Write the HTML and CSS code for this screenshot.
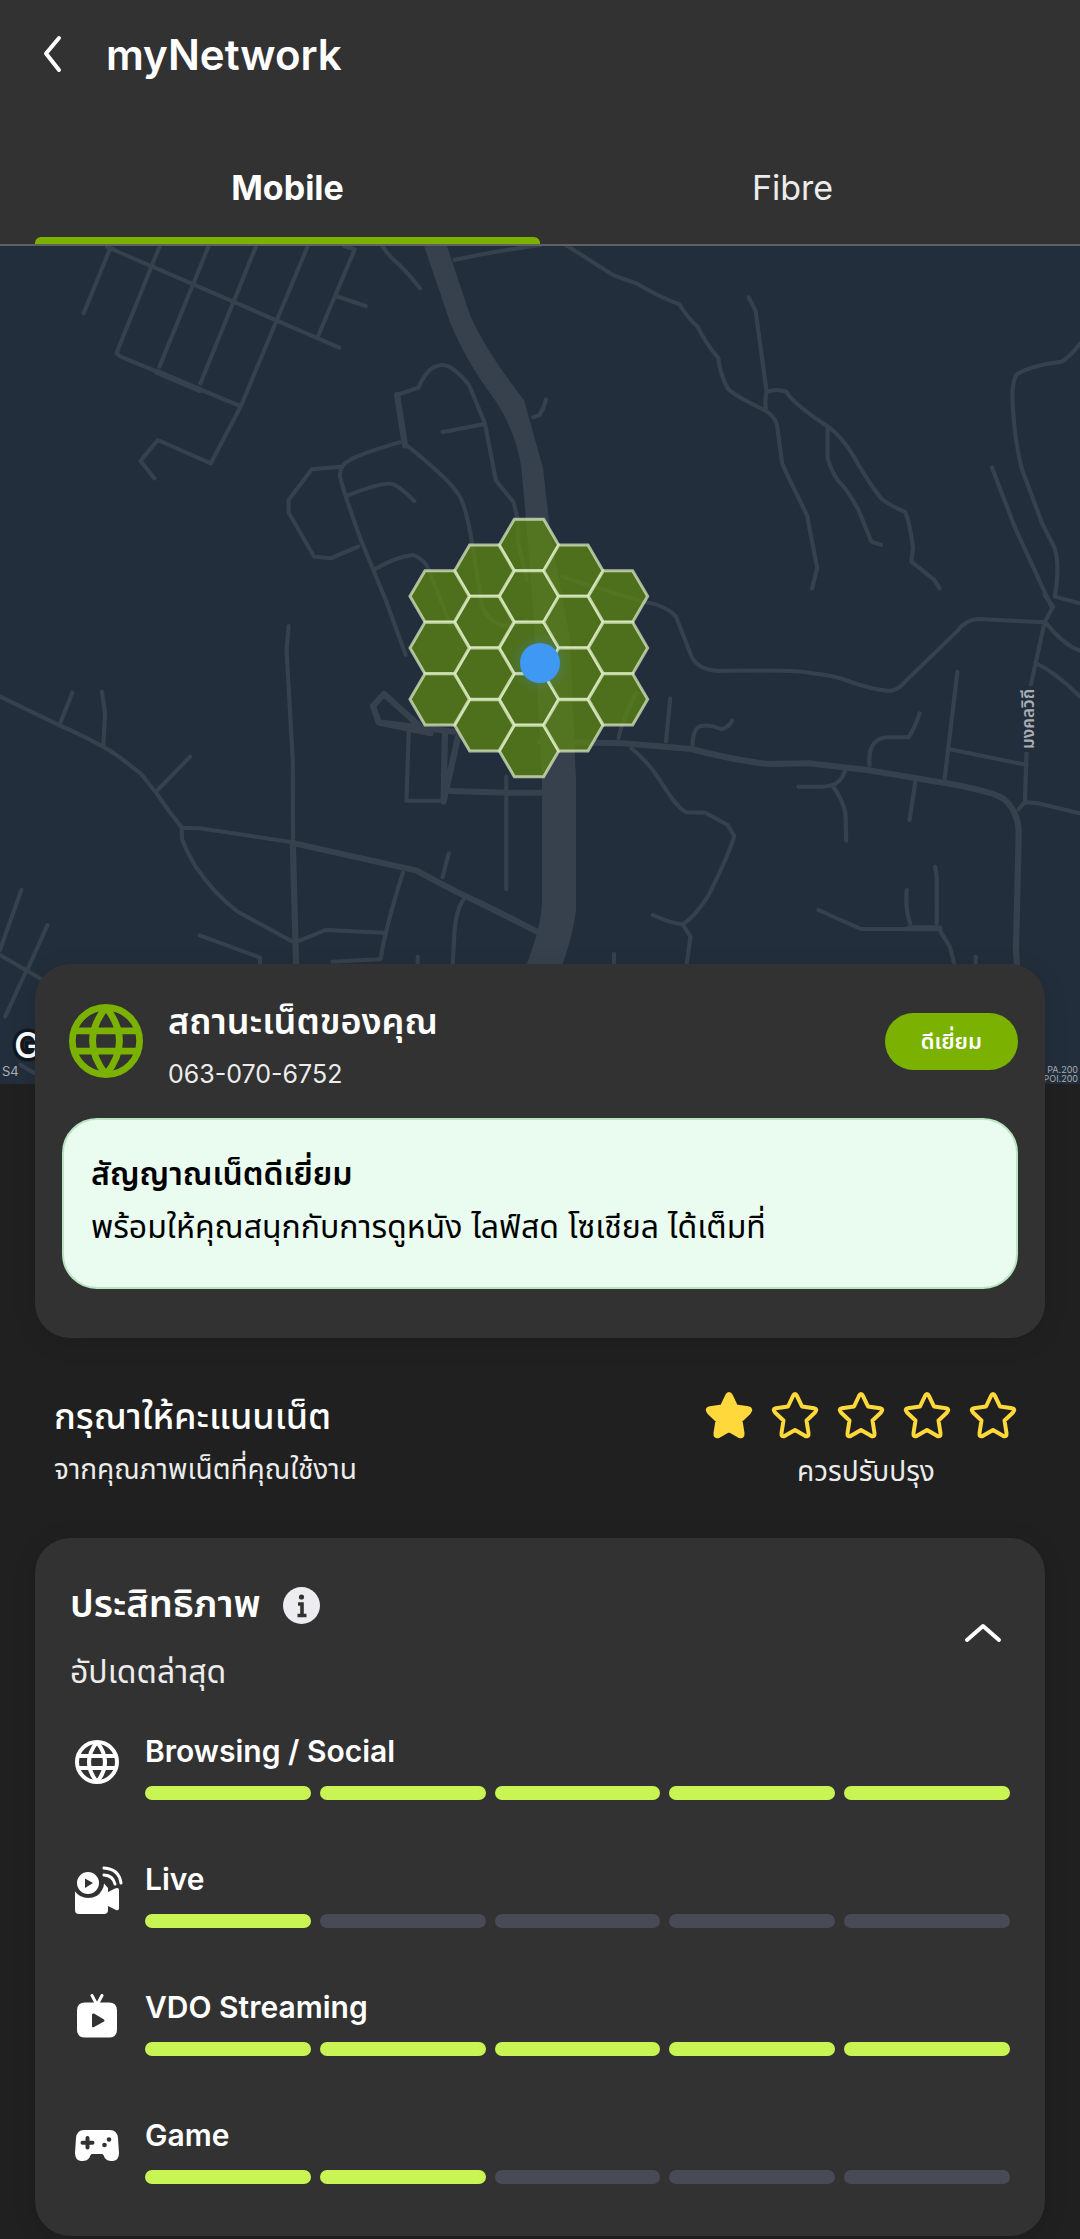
FILE: index.html
```html
<!DOCTYPE html>
<html lang="th">
<head>
    <meta charset="UTF-8">
    <meta name="viewport" content="width=device-width, initial-scale=1.0">
    <title>myNetwork</title>
    <link rel="stylesheet" href="styles.css">
</head>
<body>

<header class="header">
    <div class="title-bar">
        <button class="back-btn" aria-label="Back">
            <svg width="20" height="38" viewBox="0 0 20 38"><path d="M17 3 4 18.500 17 35"/></svg>
        </button>
        <h1>myNetwork</h1>
    </div>
    <nav class="tabs">
        <button class="tab active">Mobile</button>
        <button class="tab">Fibre</button>
    </nav>
</header>

<main>
    <div class="map">
        <svg viewBox="0 246 1080 838">
            <defs>
                <path id="hex" d="M-89 0-44-77H44L89 0 44 77H-44Z"/>
                <radialGradient id="glow">
                    <stop offset=".5" stop-color="#4098f5" stop-opacity=".2"/>
                    <stop offset="1" stop-color="#4098f5" stop-opacity="0"/>
                </radialGradient>
            </defs>
            <rect class="land" y="246" width="1080" height="838"/>

            <!-- river road -->
            <path class="road-fill" d="M424 246H447L470 315Q485 350 524 400L543 468 550 530 570 640 576 780V910Q573 935 562 966H526Q542 925 542 900V780L535 640 527 530 521 465Q515 430 495 400 465 360 450 322Z"/>

            <!-- north west -->
            <g class="roads" transform="translate(0 240) scale(.3444 .3333)">
                <path d="M243 220 320 25 985 323M310 20 330 28M465 15 338 340 350 350 695 497M607 15 463 380M745 15 582 430M895 15 700 497 612 670 458 600 408 663 448 715"/>
                <path d="M1000 18 1030 28 922 292M975 168 1062 198M1110 18Q1130 50 1160 75 1190 105 1220 145M1320 60Q1400 40 1568 15M1568 525 1548 532"/>
                <path d="M1153 465 1215 443Q1235 395 1260 382 1285 368 1308 382 1340 405 1362 435L1408 550 1440 722 1490 785Q1510 850 1503 900L1530 1020"/>
                <path d="M1285 576 1405 553M1160 607Q1050 640 1020 658 985 675 987 710 1000 765 1050 905L1120 1080 1178 1245M990 680 905 688 838 780V818L912 950 960 955 1040 920M1008 767Q1110 725 1140 732 1160 740 1203 783M1090 987Q1150 950 1200 945 1235 960 1245 990L1310 1160M1180 615Q1300 715 1325 755 1350 780 1370 905L1400 1100Q1440 1190 1530 1140"/>
                <path class="thick" d="M455 395 580 450M1153 465 1176 617"/>
            </g>

            <!-- north east -->
            <g class="roads" transform="translate(540 240) scale(.3444 .3333)">
                <path d="M75 15 215 107 280 130Q350 173 405 193 425 230 458 260 475 300 518 355 522 400 545 445 560 465 655 512 690 535 690 570L703 670Q715 700 775 825L805 985 790 1045"/>
                <path d="M606 172 626 212 658 455Q690 445 715 455 735 490 833 558 880 590 925 675 960 735 990 775 1020 800 1060 815 1075 850 1083 925L1078 965 1145 1020 1160 1045M658 455Q652 480 656 512M835 560V655Q845 690 865 722 890 745 925 810L962 905 990 915"/>
                <path d="M1568 310Q1540 350 1515 365 1430 375 1385 402 1365 430 1375 530 1380 610 1400 690L1460 855 1490 915Q1512 960 1495 1070L1568 1090M1312 682 1380 865 1485 1100"/>
                <path d="M0 520Q12 505 17 478M65 1010Q150 1040 310 1088"/>
            </g>

            <!-- south west -->
            <g class="roads" transform="translate(0 600) scale(.3444 .3333)">
                <path d="M0 290 175 377Q290 430 345 470L408 520 453 578Q490 635 528 683L580 685 850 727M175 370 210 278M296 275 305 340 300 440M453 575 552 470M838 78 832 150 850 480 851 720M528 683V715Q540 750 568 800 620 880 690 935L850 1025"/>
                <path d="M0 1050 62 870M0 1065 140 1150M80 1108 138 975M80 1105 15 1250M60 1395 110 1425M580 1006 755 1073V1100M870 1022 945 990 1115 998M1170 818Q1120 980 1105 1078L965 1085M1285 832 1303 760M1345 900Q1325 930 1320 990L1314 1100M1213 1070V1100M1470 530V867M1187 395 1180 602H1280"/>
                <path class="thick" d="M1250 400 1100 368 1083 318 1115 282 1215 375M1110 368 1320 395M1292 400 1288 605 1330 410M1310 573 1475 578H1568M850 727 860 1100M855 730 1210 812Q1330 880 1400 912L1560 995"/>
            </g>

            <!-- south east -->
            <g class="roads" transform="translate(540 600) scale(.3444 .3333)">
                <path d="M315 8Q370 20 395 50L440 170Q460 210 520 213 750 208 790 220 850 225 900 245 960 268 1015 273 1040 270 1060 245L1210 95Q1235 60 1270 57L1465 67 1490 20 1465-15M1465 67 1423 265M1470 70Q1520 135 1568 152M1440 190Q1500 220 1568 290M1413 445 1408 605 1390 628M1408 607 1445 610 1568 640"/>
                <path d="M1212 215 1175 535M1190 448 1413 495M957 495Q950 415 1010 412H1070Q1090 380 1102 340M1090 545 1073 660M885 515Q870 560 820 560H750M850 558Q880 600 887 640L889 722M1147 800 1152 830V970M1065 870Q1060 930 1075 970M808 930 932 987H1070M1160 990 1190 1040 1205 1100M1265 1070V1100"/>
                <path d="M228 415Q235 370 278 280M378 295 366 425M443 435Q445 375 475 377 500 375 525 387 545 385 558 362M265 445Q320 490 360 560 400 625 425 637L480 638 545 675 564 708Q550 760 490 885 450 950 415 973 380 970 328 945M415 975 437 1010 425 1100M215 1062V1100"/>
                <path class="thick" d="M0 425 240 430 440 447Q560 480 660 492L780 490 950 510 1210 555Q1330 580 1350 600 1390 640 1390 700L1382 1050 1385 1100M1072 985H1160"/>
            </g>

            <g class="hexes" transform="translate(380 500) scale(.3333)">
                <use href="#hex" x="447" y="135"/>
                <use href="#hex" x="447" y="289"/>
                <use href="#hex" x="447" y="444"/>
                <use href="#hex" x="447" y="598"/>
                <use href="#hex" x="447" y="753"/>
                <use href="#hex" x="313" y="212"/>
                <use href="#hex" x="313" y="366"/>
                <use href="#hex" x="313" y="521"/>
                <use href="#hex" x="313" y="676"/>
                <use href="#hex" x="580" y="212"/>
                <use href="#hex" x="580" y="366"/>
                <use href="#hex" x="580" y="521"/>
                <use href="#hex" x="580" y="676"/>
                <use href="#hex" x="179" y="289"/>
                <use href="#hex" x="179" y="444"/>
                <use href="#hex" x="179" y="598"/>
                <use href="#hex" x="714" y="289"/>
                <use href="#hex" x="714" y="444"/>
                <use href="#hex" x="714" y="598"/>
            </g>
            <circle cx="540" cy="663" r="30" fill="url(#glow)"/>
            <circle cx="540" cy="663" r="20" fill="#4098f5"/>

            <rect class="land" x="1014" y="686" width="26" height="66"/>
            <text class="road-name" transform="translate(1034 749) rotate(-90)">มงคลวิถี</text>
            <text class="logo" x="14" y="1058">Google</text>
            <text class="credit" x="2" y="1076">S4</text>
            <text class="credit small" x="1078" y="1073">PA.200</text>
            <text class="credit small" x="1078" y="1082">POI.200</text>
        </svg>
    </div>

    <section class="card status">
        <div class="status-top">
            <svg class="globe" viewBox="2 2 44 44"><use href="#globe"/></svg>
            <div class="status-name">
                <h2>สถานะเน็ตของคุณ</h2>
                <p>063-070-6752</p>
            </div>
            <span class="badge">ดีเยี่ยม</span>
        </div>
        <div class="message">
            <h3>สัญญาณเน็ตดีเยี่ยม</h3>
            <p>พร้อมให้คุณสนุกกับการดูหนัง ไลฟ์สด โซเชียล ได้เต็มที่</p>
        </div>
    </section>

    <section class="rating">
        <div class="rating-text">
            <h2>กรุณาให้คะแนนเน็ต</h2>
            <p>จากคุณภาพเน็ตที่คุณใช้งาน</p>
        </div>
        <div class="rating-score">
            <div class="stars">
                <label><input type="radio" name="score" value="1" aria-label="1" checked><svg viewBox="0 0 48 48"><use href="#star"/></svg></label>
                <label><input type="radio" name="score" value="2" aria-label="2"><svg viewBox="0 0 48 48"><use href="#star"/></svg></label>
                <label><input type="radio" name="score" value="3" aria-label="3"><svg viewBox="0 0 48 48"><use href="#star"/></svg></label>
                <label><input type="radio" name="score" value="4" aria-label="4"><svg viewBox="0 0 48 48"><use href="#star"/></svg></label>
                <label><input type="radio" name="score" value="5" aria-label="5"><svg viewBox="0 0 48 48"><use href="#star"/></svg></label>
            </div>
            <p>ควรปรับปรุง</p>
        </div>
    </section>

    <section class="card performance">
        <div class="performance-top">
            <div>
                <div class="performance-title">
                    <h2>ประสิทธิภาพ</h2>
                    <button class="info-btn" aria-label="Info">
                        <svg viewBox="0 0 37 37"><circle cx="18.500" cy="18.500" r="18.500" fill="#ececf1"/><circle cx="18.500" cy="10" r="2.600" fill="#323232"/><path d="M15 17h4v11M14.500 28.500h9" fill="none" stroke="#323232" stroke-width="3.600"/></svg>
                    </button>
                </div>
                <p>อัปเดตล่าสุด</p>
            </div>
            <button class="toggle-btn" aria-label="Collapse">
                <svg width="38" height="20" viewBox="0 0 38 20"><path d="M3 17 19 3 35 17"/></svg>
            </button>
        </div>

        <ul class="metrics">
            <li>
                <svg class="icon" viewBox="0 0 50 50"><use href="#globe"/></svg>
                <div class="metric">
                    <h3>Browsing / Social</h3>
                    <div class="bars"><i class="on"></i><i class="on"></i><i class="on"></i><i class="on"></i><i class="on"></i></div>
                </div>
            </li>
            <li>
                <svg class="icon" viewBox="0 0 50 50">
                    <path fill-rule="evenodd" d="M15 6a11 11 0 1 0 0 22 11 11 0 1 0 0-22ZM12 12.500 20 17 12 22Z"/>
                    <path d="M2 25.500Q7 32 15 32 25 32 29 24 31 21 31 17.500L35 22V26L42 22.500Q46 21 46 24V42Q46 45 43 44L35 40V44Q35 48 31 48H6Q2 48 2 44Z"/>
                    <path class="line" d="M31 2Q46 3 48 17M31 9Q40 9.500 42 18"/>
                </svg>
                <div class="metric">
                    <h3>Live</h3>
                    <div class="bars"><i class="on"></i><i></i><i></i><i></i><i></i></div>
                </div>
            </li>
            <li>
                <svg class="icon" viewBox="0 0 50 50">
                    <path fill-rule="evenodd" d="M12 8.500H36Q44 8.500 44 16.500V35.500Q44 43.500 36 43.500H12Q4 43.500 4 35.500V16.500Q4 8.500 12 8.500ZM19 20.500V32.500Q19.500 34 21 33L31 27.500Q32 26.500 31 25.500L21 19.500Q19.500 19 19 20.500Z"/>
                    <path class="line" d="M19 1.500 23 9M29 1.500 25 9"/>
                </svg>
                <div class="metric">
                    <h3>VDO Streaming</h3>
                    <div class="bars"><i class="on"></i><i class="on"></i><i class="on"></i><i class="on"></i><i class="on"></i></div>
                </div>
            </li>
            <li>
                <svg class="icon" viewBox="0 0 50 50">
                    <path d="M11 8H37Q44 8 45 16L46 31Q46 38 40 39 34 39.500 31.500 35.500 30.500 32 29 32H19Q17.500 32 16.500 35.500 14 39.500 8 39 2 38 2 31L3 16Q4 8 11 8Z"/>
                    <path class="cut" d="M14.500 16V25.500M9.500 20.700H19.500"/>
                    <circle class="dot" cx="36" cy="17.500" r="2.300"/>
                    <circle class="dot" cx="31.500" cy="23" r="2.300"/>
                </svg>
                <div class="metric">
                    <h3>Game</h3>
                    <div class="bars"><i class="on"></i><i class="on"></i><i></i><i></i><i></i></div>
                </div>
            </li>
        </ul>
    </section>
</main>

<!-- shared icons -->
<svg class="sprite" aria-hidden="true">
    <symbol id="globe" overflow="visible">
        <g fill="none" stroke="currentColor" stroke-width="4">
            <circle cx="24" cy="24" r="20"/>
            <path d="M24 4Q8 24 24 44M24 4Q40 24 24 44M5 18H43M5 30H43"/>
        </g>
    </symbol>
    <symbol id="star" overflow="visible">
        <path d="M22 5Q24 1 26 5L31 15.500 43 17.200Q47 18 44 21.500L35.500 29.500 37.500 42Q38 46.500 34 44.800L24 39 14 44.800Q10 46.500 10.500 42L12.500 29.500 4 21.500Q1 18 5 17.200L17 15.500Z"/>
    </symbol>
</svg>

</body>
</html>
```
FILE: styles.css
```css
* { box-sizing: border-box; margin: 0; padding: 0; }
body { min-height: 100vh; font-family: Inter, "Liberation Sans", "Noto Sans Thai", sans-serif; background: #202020; color: #fff; }
button { font: inherit; color: inherit; background: none; border: none; cursor: pointer; }
svg { display: block; }
.sprite { position: absolute; width: 0; height: 0; }

.header { background: #323232; border-bottom: 2px solid #5f6062; }
.title-bar { display: flex; align-items: center; gap: 44px; height: 108px; padding: 0 42px; }
.title-bar h1 { font-size: 42px; font-weight: 600; }
.back-btn path, .toggle-btn path { fill: none; stroke: #fff; stroke-width: 4; stroke-linecap: round; stroke-linejoin: round; }
.tabs { display: flex; padding: 30px 35px 0; }
.tab { display: flex; flex: 1; flex-direction: column; align-items: center; height: 106px; font-size: 34px; line-height: 99px; color: #ececec; }
.tab.active { font-weight: 700; color: #fff; }
.tab.active::after { content: ""; width: 100%; height: 7px; background: #7bb100; border-radius: 6px 6px 0 0; }

.map svg { width: 100%; height: auto; }
.land { fill: #232e3c; }
.roads { fill: none; stroke: #37414e; stroke-width: 12; stroke-linecap: round; stroke-linejoin: round; }
.roads .thick { stroke-width: 18; }
.road-fill { fill: #37414e; }
.hexes { fill: rgba(94, 134, 17, 0.75); stroke: rgba(228, 242, 205, 0.7); stroke-width: 9; }
.road-name { font-size: 17px; font-weight: 600; fill: #a9adb5; }
.logo { font-size: 36px; font-weight: 500; fill: #fff; stroke: #111820; stroke-width: 7; paint-order: stroke; }
.credit { font-size: 13px; fill: #a9adb5; }
.credit.small { font-size: 9px; text-anchor: end; }

.card { margin: 0 35px; background: #323232; border-radius: 35px; box-shadow: 0 4px 24px rgba(0, 0, 0, 0.12); }
.status { position: relative; margin-top: -120px; padding: 36px 27px 49px; }
.status-top { display: flex; align-items: center; height: 82px; margin-bottom: 36px; padding-left: 7px; }
.globe { width: 74px; height: 74px; color: #7bb100; }
.status-name { flex: 1; margin: 16px 0 0 25px; }
.status-name h2 { font-size: 36px; font-weight: 600; line-height: 50px; }
.status-name p { font-size: 25px; line-height: 56px; color: #ececec; }
.badge { padding: 0 36px; font-size: 22px; font-weight: 600; line-height: 57px; background: #7bb100; border-radius: 29px; }
.message { padding: 27px 27px 34px; color: #000; background: #eafbf0; border: 2px solid #b9e6c2; border-radius: 35px; }
.message h3 { font-size: 32px; font-weight: 600; line-height: 53px; }
.message p { font-size: 32px; line-height: 53px; }

.rating { display: flex; justify-content: space-between; padding: 53px 53px 38px 54px; }
.rating h2 { font-size: 36px; font-weight: 500; line-height: 50px; }
.rating p { font-size: 28px; line-height: 57px; color: #ececec; }
.rating-score { text-align: center; }
.stars { display: flex; gap: 18px; height: 52px; padding-right: 10px; }
.stars label { position: relative; cursor: pointer; }
.stars input { position: absolute; width: 48px; height: 48px; opacity: 0; }
.stars svg { width: 48px; height: 48px; fill: none; stroke: #ffd83b; stroke-width: 4; stroke-linejoin: round; }
.stars input:checked + svg { fill: #ffd83b; }

.performance { padding: 38px 35px 52px; }
.performance-top { display: flex; align-items: flex-start; justify-content: space-between; margin-bottom: 21px; padding-right: 8px; }
.performance-title { display: flex; align-items: center; gap: 22px; height: 58px; }
.performance h2 { font-size: 38px; font-weight: 600; }
.performance p { font-size: 32px; line-height: 76px; color: #ececec; }
.info-btn svg { width: 37px; height: 37px; }
.toggle-btn { margin-top: 47px; }
.metrics { list-style: none; display: grid; gap: 59px; }
.metrics li { display: flex; gap: 22px; }
.icon { width: 50px; height: 50px; margin: 7px 0 0 3px; fill: #fff; }
.icon .line { fill: none; stroke: #fff; stroke-width: 3; stroke-linecap: round; }
.icon .cut { fill: none; stroke: #323232; stroke-width: 4; stroke-linecap: round; }
.icon .dot { fill: #323232; }
.metric { flex: 1; }
.metric h3 { font-size: 30px; font-weight: 600; line-height: 40px; margin-bottom: 15px; }
.bars { display: grid; grid-template-columns: repeat(5, 1fr); gap: 9px; }
.bars i { height: 14px; background: #484b56; border-radius: 7px; }
.bars .on { background: #c8f553; }
```
